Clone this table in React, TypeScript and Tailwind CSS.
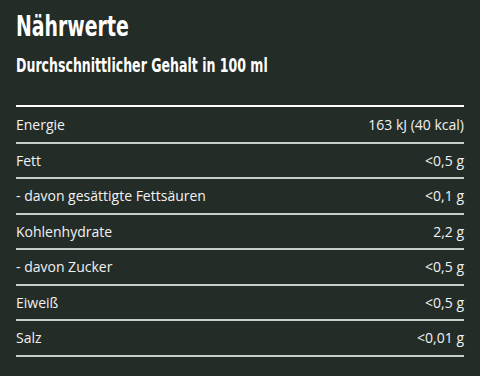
import React from 'react';

const rows: [string, string][] = [
  ['Energie', '163 kJ (40 kcal)'],
  ['Fett', '<0,5 g'],
  ['- davon gesättigte Fettsäuren', '<0,1 g'],
  ['Kohlenhydrate', '2,2 g'],
  ['- davon Zucker', '<0,5 g'],
  ['Eiweiß', '<0,5 g'],
  ['Salz', '<0,01 g'],
];

const App: React.FC = () => {
  return (
    <div className="w-[480px] h-[376px] bg-[#232c27] px-4 pt-[9px] text-[#f2f2f2] overflow-hidden">
      <h2 className="font-['DejaVu_Sans_Condensed',sans-serif] text-[28px] leading-[36px] font-bold text-white">
        <span className="inline-block origin-left scale-x-[0.75] whitespace-nowrap">Nährwerte</span>
      </h2>
      <p className="mt-[8px] font-['DejaVu_Sans_Condensed',sans-serif] text-[19px] leading-[24px] font-bold text-white">
        <span className="inline-block origin-left scale-x-[0.735] whitespace-nowrap">
          Durchschnittlicher Gehalt in 100 ml
        </span>
      </p>
      <div className="mt-[28px] border-t-[2px] border-white pt-[1px] font-['Open_Sans',sans-serif] text-[14px]">
        {rows.map(([label, value]) => (
          <div
            key={label}
            className="flex h-[35.5px] items-center justify-between border-b-2 border-[#c9ceca]"
          >
            <span>{label}</span>
            <span>{value}</span>
          </div>
        ))}
      </div>
    </div>
  );
};

export default App;
